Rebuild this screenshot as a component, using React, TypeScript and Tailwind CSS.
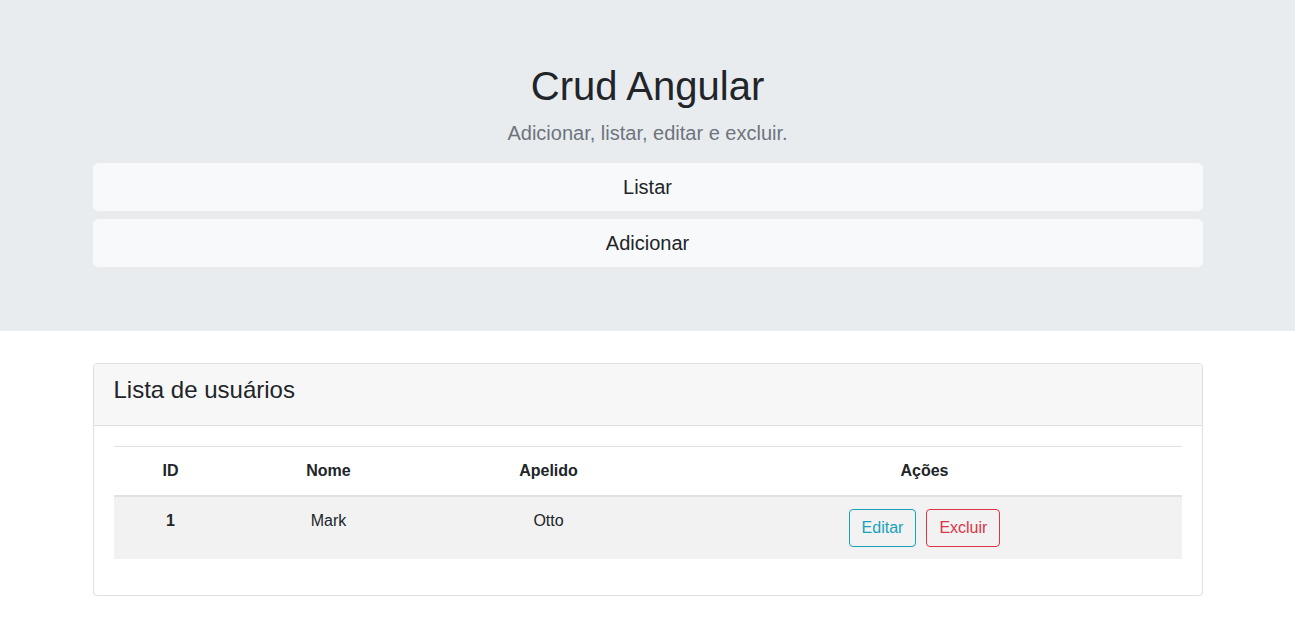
const users = [{ id: 1, nome: "Mark", apelido: "Otto" }];

export default function App() {
  return (
    <div className="min-h-screen bg-white font-['Liberation_Sans',Arial,sans-serif] text-[#212529]">
      {/* Jumbotron */}
      <header className="mb-8 bg-[#e9ecef] pt-[62px] pb-16">
        <div className="mx-auto w-[1110px] text-center">
          <h1 className="mb-2 text-[40px] leading-[48px] font-normal">Crud Angular</h1>
          <p className="mb-[15px] text-xl leading-[30px] text-[#6c757d]">
            Adicionar, listar, editar e excluir.
          </p>
          <div className="flex flex-col gap-2">
            <button className="h-12 w-full rounded-[5px] border border-[#f8f9fa] bg-[#f8f9fa] text-xl text-[#212529]">
              Listar
            </button>
            <button className="h-12 w-full rounded-[5px] border border-[#f8f9fa] bg-[#f8f9fa] text-xl text-[#212529]">
              Adicionar
            </button>
          </div>
        </div>
      </header>

      {/* Lista */}
      <main className="mx-auto w-[1110px]">
        <div className="rounded-[4px] border border-[#dfdfdf]">
          <div className="rounded-t-[4px] border-b border-[#dfdfdf] bg-[#f7f7f7] px-5 py-3">
            <h4 className="mb-2 text-2xl leading-[28.8px] font-normal">Lista de usuários</h4>
          </div>
          <div className="p-5">
            <table className="mb-4 w-full table-fixed border-collapse text-center text-base leading-6">
              <colgroup>
                <col className="w-[114px]" />
                <col className="w-[202px]" />
                <col className="w-[238px]" />
                <col />
              </colgroup>
              <thead>
                <tr>
                  <th className="border-t border-b-2 border-[#dee2e6] p-3 font-bold">ID</th>
                  <th className="border-t border-b-2 border-[#dee2e6] p-3 font-bold">Nome</th>
                  <th className="border-t border-b-2 border-[#dee2e6] p-3 font-bold">Apelido</th>
                  <th className="border-t border-b-2 border-[#dee2e6] p-3 font-bold">Ações</th>
                </tr>
              </thead>
              <tbody>
                {users.map((u) => (
                  <tr key={u.id} className="bg-[#f2f2f2] align-top">
                    <th className="p-3 font-bold">{u.id}</th>
                    <td className="p-3">{u.nome}</td>
                    <td className="p-3">{u.apelido}</td>
                    <td className="p-3">
                      <div className="flex justify-center gap-[10px]">
                        <button className="h-[38px] rounded-[4px] border border-[#17a2b8] px-3 text-base text-[#17a2b8]">
                          Editar
                        </button>
                        <button className="h-[38px] rounded-[4px] border border-[#dc3545] px-3 text-base text-[#dc3545]">
                          Excluir
                        </button>
                      </div>
                    </td>
                  </tr>
                ))}
              </tbody>
            </table>
          </div>
        </div>
      </main>
    </div>
  );
}
